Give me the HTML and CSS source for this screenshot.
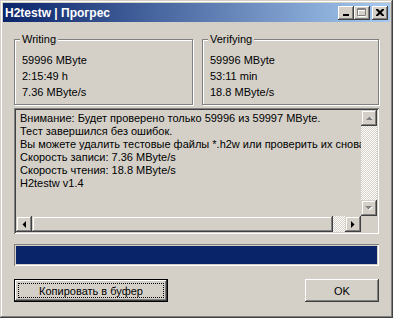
FILE: index.html
```html
<!DOCTYPE html>
<html lang="ru">
<head>
    <meta charset="UTF-8">
    <meta name="viewport" content="width=device-width, initial-scale=1.0">
    <title>H2testw | Прогрес</title>
    <link rel="stylesheet" href="styles.css">
</head>
<body>
    <div class="window">
        <!-- Title bar -->
        <div class="titlebar">
            <span class="title">H2testw | Прогрес</span>
            <div class="caption-buttons">
                <span class="cap-btn">
                    <svg width="8" height="7" viewBox="0 0 8 7"><rect x="1" y="5" width="6" height="2" fill="#000"/></svg>
                </span>
                <span class="cap-btn">
                    <svg width="10" height="9" viewBox="0 0 10 9">
                        <path d="M1.5 1.5h7v7h-7z M1 2.5h8" stroke="#fff" fill="none"/>
                        <path d="M0.5 0.5h8v7h-8z M0 1.5h9" stroke="#808080" fill="none"/>
                    </svg>
                </span>
                <span class="cap-btn close">
                    <svg width="8" height="7" viewBox="0 0 8 7"><path d="M0 0h2l2 2 2-2h2v1l-2.5 2.5 2.5 2.5v1h-2l-2-2-2 2h-2v-1l2.5-2.5-2.5-2.5z" fill="#000"/></svg>
                </span>
            </div>
        </div>

        <div class="client">
            <!-- Stats -->
            <div class="groups">
                <fieldset class="group writing">
                    <legend>Writing</legend>
                    <p>59996 MByte</p>
                    <p>2:15:49 h</p>
                    <p>7.36 MByte/s</p>
                </fieldset>
                <fieldset class="group verifying">
                    <legend>Verifying</legend>
                    <p>59996 MByte</p>
                    <p>53:11 min</p>
                    <p>18.8 MByte/s</p>
                </fieldset>
            </div>

            <!-- Log -->
            <div class="log">
                <div class="log-text">Внимание: Будет проверено только 59996 из 59997 MByte.
Тест завершился без ошибок.
Вы можете удалить тестовые файлы *.h2w или проверить их снова.
Скорость записи: 7.36 MByte/s
Скорость чтения: 18.8 MByte/s
H2testw v1.4</div>
                <div class="vscroll">
                    <span class="sb-btn">
                        <svg width="7" height="4" viewBox="0 0 7 4"><path d="M1 4h7l-3.5-3.5z" fill="#fff"/><path d="M0 4h7l-3.5-3.5z" fill="#808080"/></svg>
                    </span>
                    <span class="sb-track"></span>
                    <span class="sb-btn">
                        <svg width="8" height="5" viewBox="0 0 8 5"><path d="M1 1h7l-3.5 3.5z" fill="#fff"/><path d="M0 0h7l-3.5 3.5z" fill="#808080"/></svg>
                    </span>
                </div>
                <div class="hscroll">
                    <span class="sb-btn">
                        <svg width="4" height="7" viewBox="0 0 4 7"><path d="M4 0v7l-3.5-3.5z" fill="#000"/></svg>
                    </span>
                    <span class="sb-thumb"></span>
                    <span class="sb-track"></span>
                    <span class="sb-btn">
                        <svg width="4" height="7" viewBox="0 0 4 7"><path d="M0 0v7l3.5-3.5z" fill="#000"/></svg>
                    </span>
                </div>
                <div class="sizebox"></div>
            </div>

            <!-- Progress -->
            <div class="progress"><div class="progress-fill"></div></div>

            <!-- Buttons -->
            <div class="buttons">
                <button class="btn default"><span class="focus">Копировать в буфер</span></button>
                <button class="btn ok">OK</button>
            </div>
        </div>
    </div>
</body>
</html>
```

FILE: styles.css
```css
/* Global */
* {
    margin: 0;
    padding: 0;
    box-sizing: border-box;
}
body {
    width: 393px;
    height: 318px;
    overflow: hidden;
    background: #d4d0c8;
    font-family: "Liberation Sans", Arial, sans-serif;
    font-size: 11px;
    color: #000;
}

/* Window frame */
.window {
    width: 393px;
    height: 318px;
    padding: 3px;
    display: flex;
    flex-direction: column;
    background: #d4d0c8;
    box-shadow: inset -1px -1px #404040, inset 1px 1px #d4d0c8,
                inset -2px -2px #808080, inset 2px 2px #fff;
}

/* Title bar */
.titlebar {
    height: 19px;
    flex: 0 0 19px;
    display: flex;
    align-items: center;
    justify-content: space-between;
    padding: 0 2px;
    background: linear-gradient(to right, #0a246a, #a6caf0);
}
.title {
    color: #fff;
    font-weight: bold;
    font-size: 12px;
}
.caption-buttons {
    display: flex;
}
.cap-btn {
    width: 16px;
    height: 14px;
    display: flex;
    align-items: center;
    justify-content: center;
    background: #d4d0c8;
    box-shadow: inset -1px -1px #404040, inset 1px 1px #fff,
                inset -2px -2px #808080, inset 2px 2px #d4d0c8;
}
.cap-btn.close {
    margin-left: 2px;
}

/* Client area */
.client {
    flex: 1;
    padding: 11px 11px 0 11px;
    display: flex;
    flex-direction: column;
}

/* Group boxes */
.groups {
    display: flex;
    gap: 9px;
}
.group {
    height: 72px;
    border: 1px solid #808080;
    box-shadow: inset 1px 1px #fff, 1px 1px #fff;
    padding: 6px 0 0 7px;
    min-width: 0;
}
.group.writing {
    flex: 0 0 179px;
}
.group.verifying {
    flex: 1;
}
.group legend {
    padding: 0 2px;
    margin-left: -2px;
    line-height: 13px;
    background: #d4d0c8;
}
.group p {
    line-height: 16px;
}

/* Log box */
.log {
    margin-top: 3px;
    height: 126px;
    padding: 2px;
    display: grid;
    grid-template-columns: 1fr 16px;
    grid-template-rows: 1fr 16px;
    box-shadow: inset 1px 1px #808080, inset -1px -1px #fff,
                inset 2px 2px #404040, inset -2px -2px #d4d0c8;
}
.log-text {
    padding: 2px 0 0 4px;
    line-height: 13px;
    white-space: pre;
    overflow: hidden;
}
.vscroll {
    display: flex;
    flex-direction: column;
}
.hscroll {
    display: flex;
}
.sb-btn {
    flex: 0 0 16px;
    width: 16px;
    height: 16px;
    display: flex;
    align-items: center;
    justify-content: center;
    background: #d4d0c8;
    box-shadow: inset -1px -1px #404040, inset 1px 1px #d4d0c8,
                inset -2px -2px #808080, inset 2px 2px #fff;
}
.sb-track {
    flex: 1;
    background-color: #d4d0c8;
    background-image: conic-gradient(#fff 25%, #d4d0c8 0 50%, #fff 0 75%, #d4d0c8 0);
    background-size: 2px 2px;
}
.sb-thumb {
    flex: 0 0 301px;
    background: #d4d0c8;
    box-shadow: inset -1px -1px #404040, inset 1px 1px #d4d0c8,
                inset -2px -2px #808080, inset 2px 2px #fff;
}
.sizebox {
    background: #d4d0c8;
}

/* Progress bar */
.progress {
    margin-top: 10px;
    height: 22px;
    padding: 2px;
    box-shadow: inset 1px 1px #808080, inset -1px -1px #fff;
}
.progress-fill {
    height: 100%;
    background: #0a246a;
}

/* Buttons */
.buttons {
    margin-top: 13px;
    display: flex;
    justify-content: space-between;
}
.btn {
    height: 23px;
    font-family: inherit;
    font-size: 11px;
    color: #000;
    background: #d4d0c8;
    border: none;
    box-shadow: inset -1px -1px #404040, inset 1px 1px #fff,
                inset -2px -2px #808080, inset 2px 2px #d4d0c8;
}
.btn.default {
    width: 154px;
    padding: 3px;
    border: 1px solid #000;
}
.btn.default .focus {
    display: flex;
    align-items: center;
    justify-content: center;
    height: 100%;
    border: 1px dotted #000;
}
.btn.ok {
    width: 74px;
}
```
